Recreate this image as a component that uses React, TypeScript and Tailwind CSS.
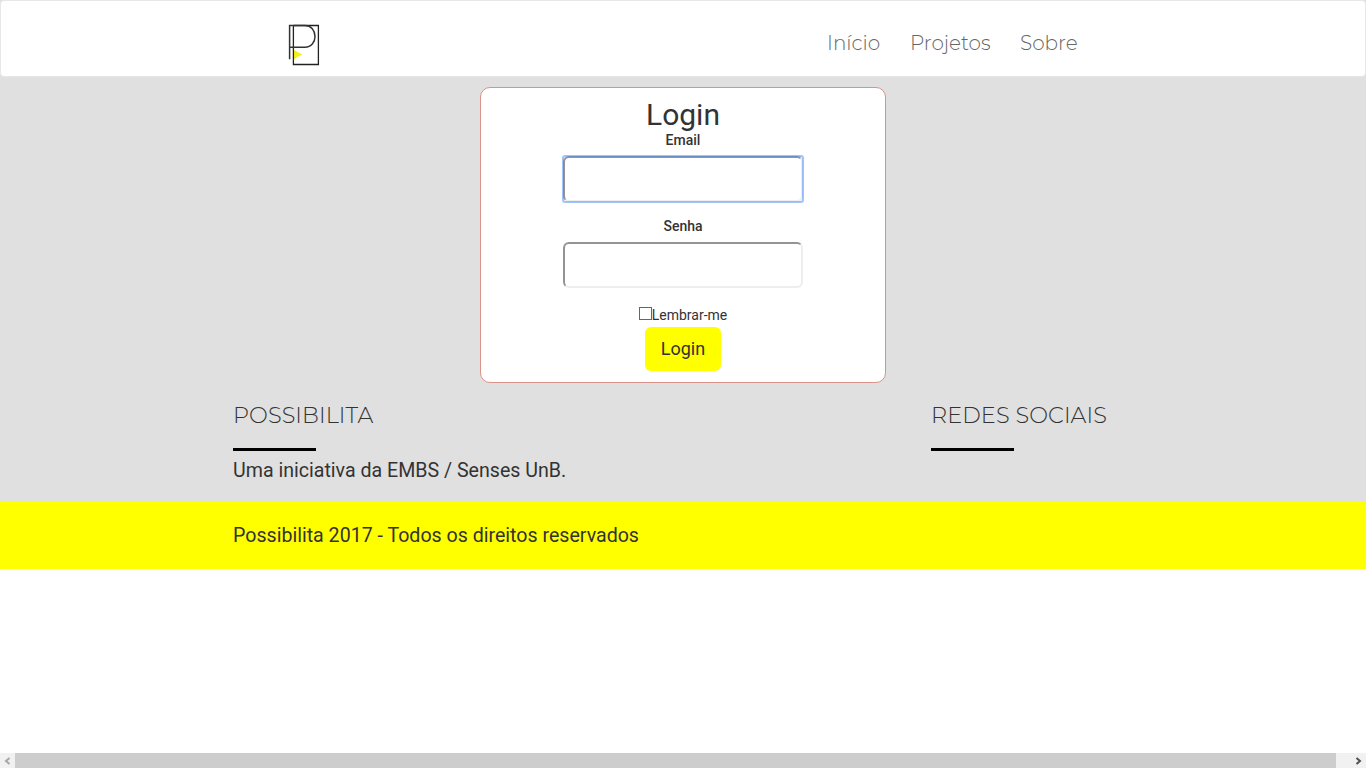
import React from "react";

const inset =
  "block h-[46px] w-[240px] rounded-md border-2 border-t-[#949494] border-l-[#949494] border-r-[#eeeeee] border-b-[#eeeeee] bg-white px-4 text-lg";

function Logo() {
  return (
    <svg width="32" height="43" viewBox="0 0 32 43" fill="none" className="block">
      <path d="M6 27 L14.2 31.5 L6 36Z" fill="#f5ee18" />
      <path d="M5.4 2.5H30.4V41.5H5.4V2.5" stroke="#222" strokeWidth="1.3" />
      <path d="M1.6 36.3V2.6H17C23.2 2.6 27 7.5 27 13.4S23.2 24.3 17 24.3H1.6" stroke="#333" strokeWidth="1.5" />
    </svg>
  );
}

function Navbar() {
  return (
    <nav className="bg-[#e0e0e0]">
      <div className="flex h-[77px] justify-between rounded border border-[#e7e7e7] bg-white pl-[287px] pr-[287px]">
        <a className="pt-[22px]"><Logo /></a>
        <div className="flex gap-[30px] pt-[27px] font-['Montserrat','Inter',sans-serif] text-[20px] leading-[30px] font-light whitespace-nowrap text-[#666]">
          <a className="w-[53px]">Início</a>
          <a className="w-[80px]">Projetos</a>
          <a className="w-[58px]">Sobre</a>
        </div>
      </div>
    </nav>
  );
}

function LoginCard() {
  return (
    <form className="mx-auto flex h-[296px] w-[406px] flex-col items-center rounded-[10px] border border-[#d9938b] bg-white pt-[10px]">
      <h2 className="text-[30px] leading-[33px]">Login</h2>
      <label className="-mt-px text-[14px] leading-[20px] font-medium">Email</label>
      <div className="mt-[6px] rounded-[2px] outline-2 outline-[#4387f980] -outline-offset-1">
        <input type="text" aria-label="Email" className={inset + " outline-none"} />
      </div>
      <label className="mt-[14px] text-[14px] leading-[20px] font-medium">Senha</label>
      <input type="password" aria-label="Senha" className={inset + " mt-[6px]"} />
      <label className="mt-[17px] flex h-[20px] items-center text-[14px] leading-[20px]">
        <input type="checkbox" className="-mt-[4px] size-[13px] appearance-none border border-[#666] bg-white" />
        <span>Lembrar-me</span>
      </label>
      <button type="button" className="mt-[2px] h-[44px] w-[76px] rounded-md bg-[#ffff00] text-[18px] leading-[24px]">
        Login
      </button>
    </form>
  );
}

function FooterHeading({ children }: { children: React.ReactNode }) {
  return (
    <>
      <h3 className="font-['Montserrat','Inter',sans-serif] text-[22.4px] leading-[26px] font-light tracking-[0.08px] whitespace-nowrap">
        {children}
      </h3>
      <div className="mt-[20px] h-[3px] w-[83px] bg-black" />
    </>
  );
}

function Scrollbar() {
  return (
    <div className="flex h-[15px] bg-[#f1f1f1]">
      <div className="flex w-[15px] items-center justify-center">
        <svg width="7" height="8" viewBox="0 0 7 8" fill="none"><path d="M5.5 1 2 4 5.5 7" stroke="#a7a7a7" strokeWidth="2" /></svg>
      </div>
      <div className="w-[1321px] bg-[#cdcdcd]" />
      <div className="flex flex-1 items-center justify-center pl-[14px]">
        <svg width="7" height="8" viewBox="0 0 7 8" fill="none"><path d="M1.5 1 5 4 1.5 7" stroke="#505050" strokeWidth="2" /></svg>
      </div>
    </div>
  );
}

export default function App() {
  return (
    <div className="flex h-[768px] w-full flex-col overflow-hidden bg-white font-['Roboto',sans-serif] text-[#333]">
      <Navbar />
      <main className="h-[424px] bg-[#e0e0e0] pt-[10px]">
        <LoginCard />
        <div className="flex pt-[19px] pl-[233px]">
          <section className="w-[698px]">
            <FooterHeading>POSSIBILITA</FooterHeading>
            <p className="mt-[5px] text-[19.6px] leading-[30px]">Uma iniciativa da EMBS / Senses UnB.</p>
          </section>
          <section>
            <FooterHeading>REDES SOCIAIS</FooterHeading>
          </section>
        </div>
      </main>
      <footer className="h-[68px] bg-[#ffff00] pt-[20px] pl-[233px]">
        <p className="text-[19.6px] leading-[30px]">Possibilita 2017 - Todos os direitos reservados</p>
      </footer>
      <div className="flex-1" />
      <Scrollbar />
    </div>
  );
}
